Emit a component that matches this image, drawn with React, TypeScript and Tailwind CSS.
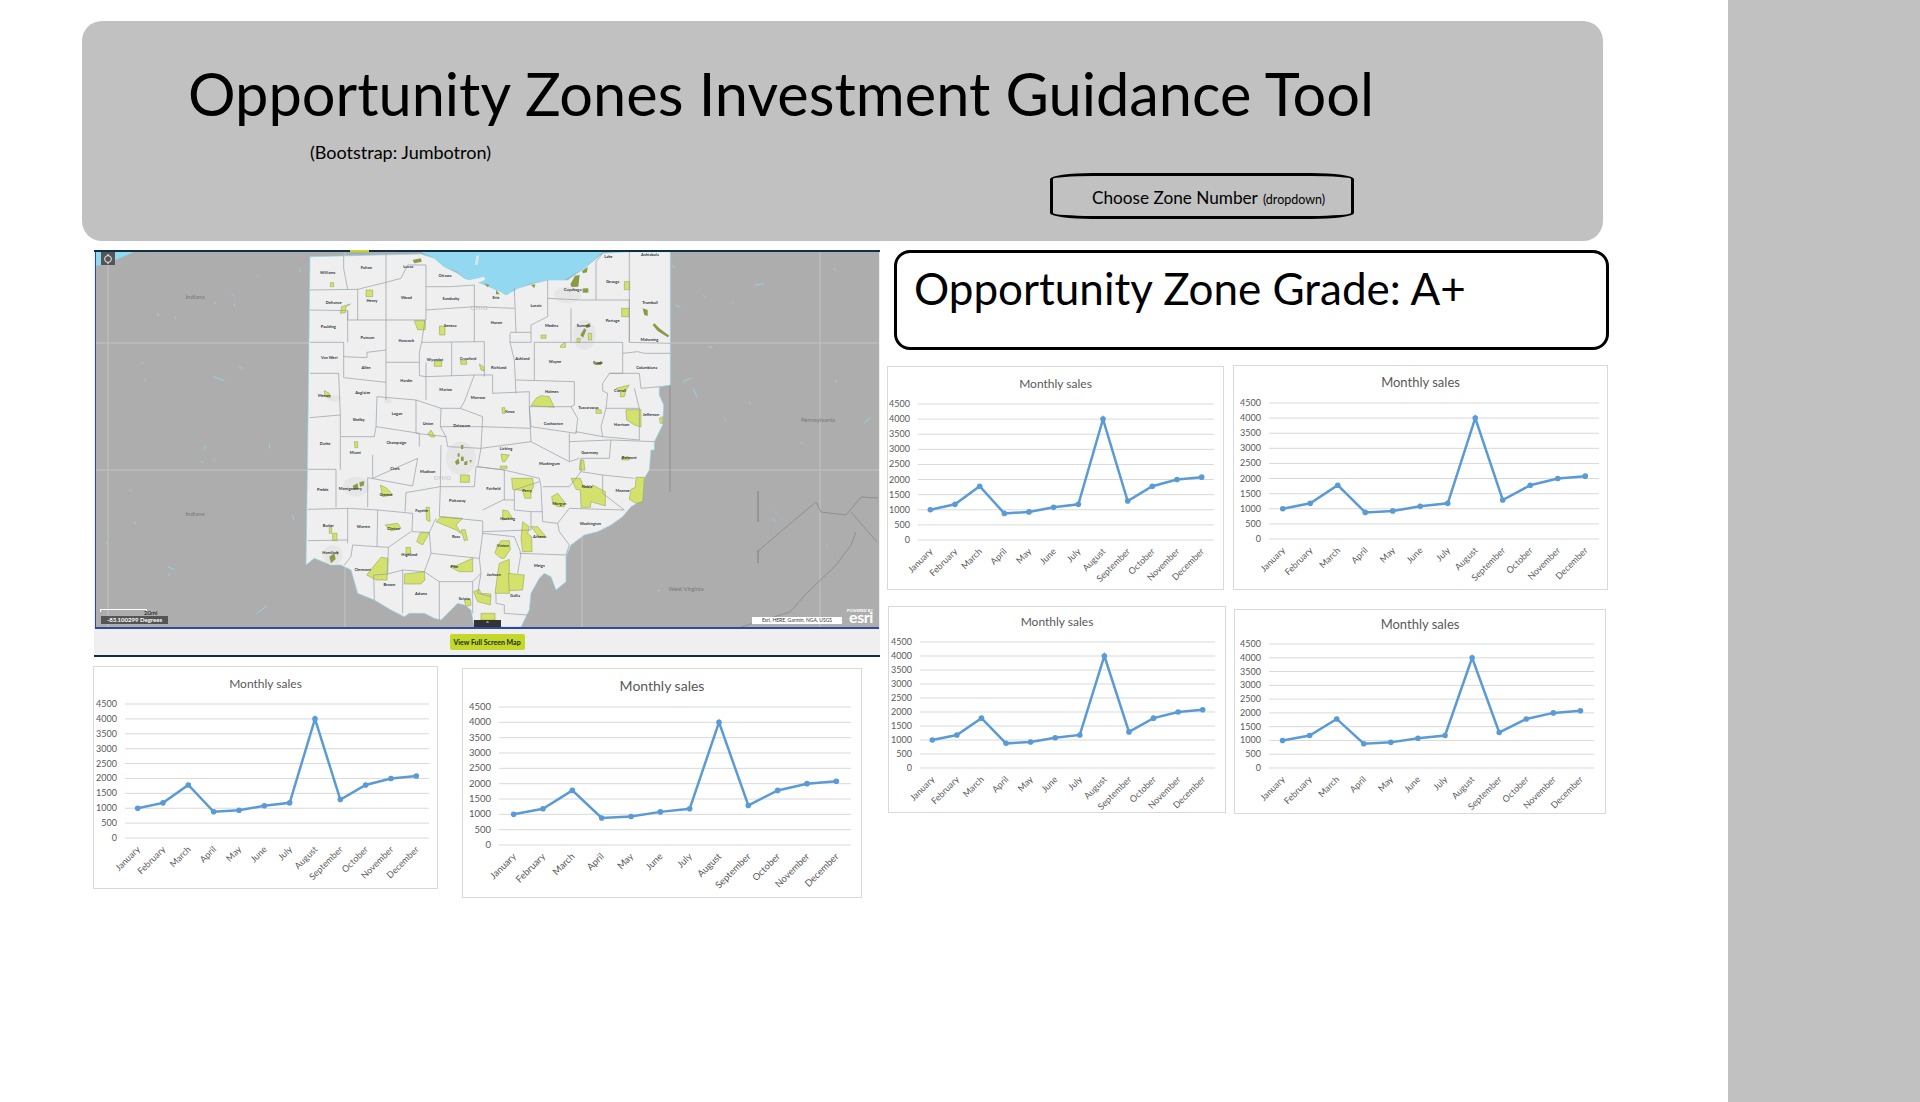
const months = ["January", "February", "March", "April", "May", "June", "July", "August", "September", "October", "November", "December"];
const sales = [1000, 1180, 1780, 880, 930, 1080, 1180, 4000, 1290, 1780, 2000, 2080];

interface ChartProps {
  w: number;
  h: number;
  left: number;
  right: number;
  top: number;
  bottom: number;
  titleY: number;
  titleSize?: number;
  labelSize?: number;
  className?: string;
}

const Chart = ({ w, h, left, right, top, bottom, titleY, titleSize = 12, labelSize = 9, className = "" }: ChartProps) => {
  const band = (right - left) / 12;
  const yFor = (v: number) => bottom - (v / 4500) * (bottom - top);
  const pts = sales.map((v, i) => [left + band * (i + 0.5), yFor(v)]);
  const ticks = [0, 500, 1000, 1500, 2000, 2500, 3000, 3500, 4000, 4500];
  return (
    <div className={`shrink-0 bg-white border border-[#d9d9d9] ${className}`} style={{ width: w, height: h }}>
      <svg width={w - 2} height={h - 2} viewBox={`1 1 ${w - 2} ${h - 2}`} className="block">
        <text x={w / 2} y={titleY + 4} textAnchor="middle" fontSize={titleSize} fill="#595959">Monthly sales</text>
        {ticks.map((t) => (
          <g key={t}>
            <line x1={left} x2={right} y1={yFor(t)} y2={yFor(t)} stroke="#d9d9d9" strokeWidth="1" />
            <text x={left - 8} y={yFor(t) + 3} textAnchor="end" fontSize={labelSize} fill="#595959">{t}</text>
          </g>
        ))}
        <polyline points={pts.map((p) => p.join(",")).join(" ")} fill="none" stroke="#5b9bd5" strokeWidth="2.5" />
        {pts.map((p, i) => (
          <circle key={i} cx={p[0]} cy={p[1]} r="2.8" fill="#5b9bd5" />
        ))}
        {months.map((m, i) => (
          <text key={m} textAnchor="end" fontSize={labelSize} fill="#595959" transform={`translate(${pts[i][0] + 3},${bottom + 12}) rotate(-45)`}>{m}</text>
        ))}
      </svg>
    </div>
  );
};

// zoom 4 / zoom 5 space: 3 units per pixel, zoom 5 rows already shifted by 615
const countyLines = [
  "128,32 128,70 140,133", "27,135 170,133 255,112", "170,133 170,225", "27,195 140,197 140,225 255,225 375,225",
  "255,28 255,225", "255,112 300,100 320,60 375,60", "375,60 375,225", "375,125 450,125 520,120 520,190", "375,195 520,185 640,190",
  "140,197 140,292", "27,292 128,292 128,398", "128,335 198,338 198,322 255,315", "255,225 255,465",
  "372,225 362,292 355,322 355,352 255,352", "128,398 255,412", "27,385 113,385 118,510 27,518",
  "375,352 375,465", "355,352 355,392 375,395 520,390", "452,292 452,392", "362,292 550,290", "520,190 520,290",
  "550,290 550,395", "640,130 645,262", "627,262 690,262 690,240 740,215 740,105", "690,262 690,292 627,292 627,265",
  "627,292 640,345 645,445", "700,292 700,405", "520,390 575,390 575,445", "520,390 490,470 478,490 545,515",
  "575,445 685,440 685,485 690,545", "645,405 820,410", "820,410 820,480 810,485 830,520 825,565",
  "700,292 965,292 965,385 925,385", "810,190 810,292", "840,165 985,165 985,292", "985,20 985,292 1108,295",
  "905,25 885,50 885,165", "740,160 840,165", "965,325 1010,320 1030,325 1108,325", "905,415 925,385 1015,385 1020,430 1075,425",
  "905,415 905,438 920,445 915,490 1015,490", "915,490 900,545 905,575 1015,585", "1000,430 1015,490 1015,585",
  "685,485 810,485", "690,545 825,565 825,560 905,575", "228,455 345,465 345,565 435,575 440,605", "228,455 225,545 220,575 120,575",
  "118,510 118,575 118,675", "225,545 355,565 355,605", "345,465 420,490 418,545 435,575", "420,490 478,490",
  "545,515 540,610", "418,545 540,545 690,550", "440,605 540,610 530,665", "685,485 690,590", "805,565 805,650",
  "540,610 690,590 805,650 835,640", "930,585 925,640", "805,590 930,585 1060,590", "925,640 840,640",
  "20,673 105,673 105,787", "215,630 215,700 350,640", "20,793 145,790 230,795", "200,698 200,787", "350,640 335,723 200,698",
  "315,743 312,800", "420,600 418,725 315,743", "230,795 335,805", "418,725 415,815 545,828", "335,805 333,860 385,862 405,820",
  "230,795 228,905 155,900", "228,905 262,907 330,860", "20,887 140,885", "140,790 140,895", "155,900 150,935 130,960",
  "218,990 220,1065", "218,990 260,987", "262,907 260,987 305,975 370,980 390,925", "305,975 305,1105", "385,862 390,925 535,940",
  "370,980 415,1010 415,1125", "415,1010 515,1010 540,985", "515,1010 515,1105", "545,828 545,865 535,940 540,985 530,1045 570,1055",
  "545,865 640,875 660,925", "420,725 520,725 525,665 610,675 610,700", "610,700 610,765 640,765 640,735 715,710",
  "530,665 610,675 715,700 720,725", "720,725 725,830 770,835", "610,763 545,795", "640,795 690,800 690,855", "640,765 640,795",
  "690,800 725,800", "545,860 690,855", "655,925 795,930 805,900 775,860 770,835", "660,925 650,985", "585,1045 585,1075 610,1080 610,1105 680,1110",
  "725,725 805,725 840,680 840,640", "905,690 905,745 970,795", "770,835 805,790 970,795", "840,680 905,690 1000,700",
];

const zones = [
  "195,135 215,135 215,155 195,155", "118,205 122,185 148,177 135,185 133,203", "88,113 98,113 98,125 88,125", "340,227 373,227 373,254 350,254",
  "415,243 432,243 432,270 416,270", "400,348 422,348 422,364 400,364", "478,347 497,347 497,358 480,358", "535,357 547,365 550,378 540,375",
  "690,482 705,460 720,452 745,455 760,487", "975,494 1020,494 1020,546 1000,540 977,525", "962,190 985,190 985,215 962,215", "970,110 986,110 986,134 970,134",
  "720,270 735,270 735,280 720,280", "780,300 793,293 793,307 778,307", "945,430 985,420 975,435 970,455 958,455 958,440", "70,437 85,445 88,458 72,455",
  "380,568 390,555 402,575 392,577", "160,590 170,590 170,608 162,608", "603,488 612,488 612,505 604,505", "885,492 900,495 902,505 885,505",
  "632,700 695,700 698,725 690,740 690,760 672,760 665,737 635,733", "810,700 838,700 845,720 870,730 875,720 913,740 913,783 870,770 868,787 840,787 838,735 825,733",
  "1005,697 1030,697 1025,770 1005,775 985,763 990,733 1003,727", "405,830 420,815 485,820 465,840 480,865 465,855", "480,855 492,853 500,885 490,887",
  "347,890 358,863 385,863 365,900", "665,830 685,845 680,865 692,875 693,920 665,920 660,880", "690,845 710,845 737,877 715,877",
  "588,905 600,887 625,887 628,913 610,940 600,940 582,925", "595,955 625,943 625,1045 582,1045 590,985", "622,985 670,990 665,1035 625,1037",
  "518,1040 535,1033 540,1045 570,1047 568,1080 530,1070", "540,1105 582,1105 582,1125 540,1125", "310,987 370,980 372,1005 360,1017 310,1017",
  "197,990 225,955 240,937 260,940 258,1005 225,1005", "447,965 470,960 515,940 515,980 475,980 455,970", "605,795 620,797 635,820 605,825",
  "238,720 258,730 275,750 245,755", "252,840 290,835 300,850 270,858", "315,907 328,907 330,927 315,930", "375,787 385,787 387,830 377,825",
  "752,755 770,745 790,770 790,785 770,785 755,775", "838,645 848,645 852,675 835,675", "478,690 505,690 505,712 478,712", "600,627 625,630 612,650 604,650",
  "598,663 618,663 618,670 598,670", "85,845 92,845 92,865 85,865", "95,865 108,865 108,887 95,887", "490,1065 508,1063 510,1080 495,1085",
  "1075,520 1085,515 1085,535 1078,535", "962,637 985,637 985,645 962,645", "862,265 872,265 872,285 862,285", "828,280 838,280 836,292 828,292",
];

const darkZones = [
  "808,118 822,92 836,90 832,125 812,126", "843,78 860,66 858,82 846,85", "845,130 862,130 862,143 845,143", "335,45 360,40 362,50 340,55",
  "838,270 850,250 856,255 846,278", "855,240 866,234 866,246 856,250", "1025,190 1040,195 1040,213 1030,210", "550,115 565,120 560,127", "585,135 597,148 585,148",
  "462,650 472,640 476,655 466,660", "480,635 488,635 488,648 480,648", "490,650 500,648 498,660 490,660", "470,625 476,625 476,635 470,635", "505,645 512,645 510,655",
  "480,600 487,600 487,612 480,612", "155,722 170,715 172,730 160,735", "175,712 190,708 188,722 177,725", "85,935 100,925 104,942 90,955", "105,918 112,920 110,932",
  "690,120 703,118 700,130", "885,353 905,350 900,360 880,360", "1060,235 1075,250 1105,272 1100,277 1070,258 1055,240",
];

const patches: [number, number, number, number][] = [[800, 150, 40, 25], [480, 640, 45, 50], [165, 725, 40, 30], [850, 270, 35, 45], [95, 930, 30, 30], [260, 468, 12, 8], [100, 460, 22, 10]];

const labels: [string, number, number][] = [
  ["Williams", 80, 83], ["Fulton", 196, 68], ["Lucas", 322, 65], ["Ottawa", 432, 93], ["Defiance", 98, 172], ["Henry", 213, 167], ["Wood", 316, 157],
  ["Sandusky", 450, 160], ["Erie", 585, 157], ["Lorain", 705, 182], ["Cuyahoga", 815, 135], ["Geauga", 935, 110], ["Ashtabula", 1047, 30], ["Lake", 922, 35],
  ["Trumbull", 1047, 172], ["Portage", 935, 226], ["Summit", 848, 242], ["Medina", 752, 243], ["Huron", 586, 234], ["Seneca", 448, 242], ["Hancock", 316, 287],
  ["Putnam", 199, 279], ["Paulding", 82, 245], ["Van Wert", 85, 339], ["Allen", 195, 368], ["Wyandot", 402, 343], ["Crawford", 501, 340], ["Richland", 593, 367],
  ["Ashland", 664, 342], ["Wayne", 762, 349], ["Stark", 890, 353], ["Mahoning", 1045, 283], ["Columbiana", 1037, 369], ["Mercer", 70, 452], ["Auglaize", 185, 443],
  ["Hardin", 316, 407], ["Marion", 434, 433], ["Morrow", 531, 457], ["Knox", 627, 501], ["Holmes", 752, 441], ["Tuscarawas", 862, 488], ["Carroll", 957, 436],
  ["Jefferson", 1050, 508], ["Harrison", 962, 538], ["Coshocton", 757, 536], ["Shelby", 173, 525], ["Logan", 288, 505], ["Union", 381, 536], ["Delaware", 482, 543],
  ["Licking", 615, 610], ["Muskingum", 745, 657], ["Guernsey", 866, 624], ["Belmont", 985, 637], ["Darke", 72, 595], ["Miami", 163, 623], ["Champaign", 286, 593],
  ["Clark", 282, 672], ["Madison", 380, 679], ["Preble", 65, 734], ["Montgomery", 148, 730], ["Greene", 255, 750], ["Pickaway", 469, 767], ["Fairfield", 577, 730],
  ["Perry", 678, 737], ["Morgan", 775, 775], ["Noble", 858, 725], ["Monroe", 965, 737], ["Washington", 868, 835], ["Athens", 715, 876], ["Hocking", 620, 820],
  ["Fayette", 362, 798], ["Ross", 465, 875], ["Butler", 82, 841], ["Warren", 187, 844], ["Clinton", 277, 850], ["Highland", 325, 928], ["Hamilton", 88, 923],
  ["Clermont", 185, 975], ["Brown", 265, 1018], ["Adams", 360, 1046], ["Scioto", 490, 1062], ["Pike", 460, 964], ["Jackson", 578, 988], ["Vinton", 605, 903],
  ["Meigs", 715, 962], ["Gallia", 642, 1053],
];

const ohio = "27,35 360,27 400,40 430,65 470,85 490,100 540,115 600,140 615,150 650,130 700,115 740,105 800,105 850,70 905,25 985,20 1108,20 1108,420 1075,425 1075,450 1088,480 1085,540 1060,590 1060,615 1050,615 1045,675 1030,700 1025,765 990,785 965,815 930,840 890,860 850,870 810,900 795,935 795,1010 765,1035 750,995 730,985 715,1000 690,1045 685,1095 660,1146 520,1146 510,1095 490,1080 470,1075 420,1125 400,1120 370,1105 325,1105 310,1115 270,1095 220,1065 170,1045 150,975 120,960 90,960 40,940 15,960 20,615";
const lake = "360,21 400,40 430,65 470,80 490,100 540,115 600,140 615,150 650,130 690,115 740,105 790,105 850,70 905,21";

// tiny water specks, in the coordinates of the wide map crop: x, y, dx, dy
const specks = [
  [130, 205, 3, 8], [165, 215, 0, 8], [275, 145, 6, 8], [280, 175, 2, 10], [240, 170, 5, 6], [325, 90, 4, 6], [410, 70, 0, 12], [350, 598, 0, 12], [225, 600, -3, 15], [240, 640, 4, 8],
  [395, 810, 3, 15], [85, 830, 2, 8], [150, 965, 15, 10], [155, 985, -3, 8], [30, 890, 0, 6], [105, 400, 2, 8], [240, 395, 22, 12], [290, 365, 6, 6], [100, 350, 2, 6], [215, 650, 5, 3],
  [1200, 150, 4, 6], [1300, 120, 18, -3], [1255, 170, 5, 8], [1210, 305, 8, 3], [1460, 405, 0, 8], [1145, 180, 10, 6], [1290, 470, 2, 8], [1240, 520, 6, 8], [1515, 535, 12, -18], [1395, 590, -3, 6],
  [1140, 60, 4, 10], [1160, 410, 18, -12], [1180, 430, 8, 25], [1455, 70, 6, 8], [1335, 820, 6, 8], [1340, 800, 4, 4], [1110, 1035, 6, 3], [1440, 900, 4, 4], [75, 735, 4, 3], [325, 1105, 20, -22],
];
const borders = [
  "661,300 689,276 720,250 725,260 750,263 765,245 782,246", "645,375 694,360 709,343 740,313 755,293 760,280", "755,260 781,290",
];

const MapView = () => (
  <svg width={783} height={375} viewBox="0 0 783 375" className="block bg-[#adadad]">
    <polygon points="0,0 38,0 10,12 0,14" fill="#92d8f1" />
    {[12, 249, 486, 724].map((x) => <line key={x} x1={x} x2={x} y1={0} y2={375} stroke="#c4c4c4" strokeWidth="1" />)}
    {[91, 218].map((y) => <line key={y} x1={0} x2={783} y1={y} y2={y} stroke="#c4c4c4" strokeWidth="1" />)}
    {specks.map(([x, y, dx, dy]) => {
      const mx = x / 1.96 - 5;
      const my = y / 3 - 7;
      return <line key={`${x}-${y}`} x1={mx} y1={my} x2={mx + dx / 1.96} y2={my + dy / 3} stroke="#8fd8ee" strokeWidth="0.9" />;
    })}
    {borders.map((r) => <polyline key={r} points={r} fill="none" stroke="#7d8487" strokeWidth="0.7" />)}
    <line x1={662} x2={662} y1={239} y2={270} stroke="#7c7c7c" strokeWidth="1" />
    <line x1={662} x2={662} y1={298} y2={311} stroke="#7c7c7c" strokeWidth="1" />
    <line x1={574} x2={574} y1={133} y2={240} stroke="#8d8d8d" strokeWidth="1" />
    <text x={99} y={47} fontSize="6" fill="#777" textAnchor="middle">Indiana</text>
    <text x={99} y={264} fontSize="6" fill="#777" textAnchor="middle">Indiana</text>
    <text x={722} y={170} fontSize="6" fill="#777" textAnchor="middle">Pennsylvania</text>
    <text x={590} y={339} fontSize="6" fill="#777" textAnchor="middle">West Virginia</text>
    <g transform="translate(205,-7) scale(0.33333)">
      <polygon points={ohio} fill="#efefef" stroke="#8fd6ef" strokeWidth="2" />
      {patches.map(([x, y, rx, ry]) => <ellipse key={x} cx={x} cy={y} rx={rx} ry={ry} fill="#e6e6e6" />)}
      <polygon points={lake} fill="#92d8f1" />
      <polygon points="465,115 550,95 552,105 490,130" fill="#efefef" />
      <polygon points="525,35 535,30 530,60 522,60" fill="#d8e6ea" />
      {zones.map((z) => <polygon key={z} points={z} fill="#d4e26d" stroke="#8a9a45" strokeWidth="1.5" />)}
      {darkZones.map((z) => <polygon key={z} points={z} fill="#8a9a45" />)}
      {countyLines.map((c) => <polyline key={c} points={c} fill="none" stroke="#8f9aa1" strokeWidth="2" />)}
      <text x={535} y={196} fontSize="17" fill="#b9b9b9" textAnchor="middle" letterSpacing="2">OHIO</text>
      <text x={425} y={706} fontSize="17" fill="#b9b9b9" textAnchor="middle" letterSpacing="2">OHIO</text>
      {labels.map(([n, x, y]) => <text key={n} x={x} y={y + 4} fontSize="12" fill="#26343b" textAnchor="middle" fontWeight="700">{n}</text>)}
    </g>
  </svg>
);

const App = () => {
  return (
    <div className="flex w-[1920px] h-[1102px] overflow-hidden bg-white font-['Lato',sans-serif] text-black">
      <main className="w-[1728px] shrink-0 pt-[21px]">
        <header className="ml-[82px] w-[1521px] h-[220px] rounded-[20px] bg-[#c1c1c1] pl-[106px] pt-[36px]">
          <h1 className="text-[59.5px] leading-[72px]">Opportunity Zones Investment Guidance Tool</h1>
          <p className="ml-[122px] mt-[12px] text-[18px] leading-[22px]">(Bootstrap: Jumbotron)</p>
          <div className="ml-[862px] mt-[10px] w-[304px] h-[46px] rounded-[43px/6px] border-[3px] border-black flex items-baseline pl-[39px] pt-[12px]">
            <span className="text-[17.2px] leading-[20px]">Choose Zone Number</span>
            <span className="ml-[5px] text-[12.5px] leading-[20px]">(dropdown)</span>
          </div>
        </header>

        <div className="flex mt-[9px] ml-[93px]">
          <div className="w-[794px] shrink-0">
            <section className="ml-[1px] w-[786px] border-t-2 border-b-2 border-t-[#0f2f45] border-b-[#0f2f45] bg-[#efefef]">
              <div className="relative mx-[1px] border-x border-b-2 border-[#2e4a9e]">
                <MapView />
                <span className="absolute left-[5px] top-0 w-[14px] h-[13px] bg-[#555] flex items-center justify-center">
                  <svg width="10" height="10" viewBox="0 0 10 10" fill="none" stroke="#eee" strokeWidth="1"><circle cx="5" cy="5" r="3.4" /><path d="M5 0v2M5 8v2" /></svg>
                </span>
                <span className="absolute left-[254px] -top-[2px] w-[19px] h-[2px] bg-[#c3d82a]" />
                <div className="absolute left-[4px] bottom-[15px] w-[47px] h-[3px] border-x border-t border-white" />
                <span className="absolute left-[48px] bottom-[11px] text-[6px] leading-none text-black">20mi</span>
                <span className="absolute left-[5px] bottom-[3px] w-[67px] h-[8px] bg-[#555] text-white text-[6px] leading-[8px] font-bold pl-[6px] whitespace-nowrap">-83.100299 Degrees</span>
                <span className="absolute left-[378px] bottom-0 w-[27px] h-[7px] bg-[#333] text-white text-[5px] leading-[7px] text-center">^</span>
                <span className="absolute right-[36px] bottom-[3px] w-[90px] h-[7px] bg-white text-[5px] leading-[7px] text-[#333] text-center whitespace-nowrap">Esri, HERE, Garmin, NGA, USGS</span>
                <span className="absolute right-[5px] bottom-[14px] text-[4px] leading-none font-bold text-white">POWERED BY</span>
                <span className="absolute right-[5px] bottom-[2px] text-[16px] leading-none font-bold text-white tracking-tight">esri</span>
              </div>
              <div className="h-[26px] flex items-center justify-center">
                <button className="w-[75px] h-[16px] rounded-[2px] bg-[#c3d82a] text-[7px] leading-none font-bold text-[#1d2a14] whitespace-nowrap">View Full Screen Map</button>
              </div>
            </section>
            <div className="flex items-start mt-[9px]">
              <Chart w={345} h={223} left={32} right={336} top={38} bottom={172} titleY={18} />
              <Chart w={400} h={230} left={37} right={389} top={39} bottom={177} titleY={19} titleSize={14} labelSize={9.5} className="ml-[24px] mt-[2px]" />
            </div>
          </div>

          <div className="shrink-0">
            <div className="ml-[7px] w-[715px] h-[100px] rounded-[16px] border-[3px] border-black pl-[17px] pt-[9px]">
              <h2 className="text-[44px] leading-[52px]">Opportunity Zone Grade: A+</h2>
            </div>
            <div className="flex items-start mt-[15px]">
              <Chart w={337} h={224} left={31} right={327} top={38} bottom={174} titleY={18} className="mt-[1px]" />
              <Chart w={375} h={225} left={36} right={366} top={38} bottom={174} titleY={18} titleSize={13} className="ml-[9px]" />
            </div>
            <div className="flex items-start mt-[16px]">
              <Chart w={338} h={207} left={32} right={327} top={36} bottom={162} titleY={16} className="ml-[1px]" />
              <Chart w={372} h={205} left={35} right={360} top={35} bottom={159} titleY={16} titleSize={13} className="ml-[8px] mt-[3px]" />
            </div>
          </div>
        </div>
      </main>
      <aside className="w-[192px] h-full bg-[#c1c1c1]" />
    </div>
  );
};

export default App;
